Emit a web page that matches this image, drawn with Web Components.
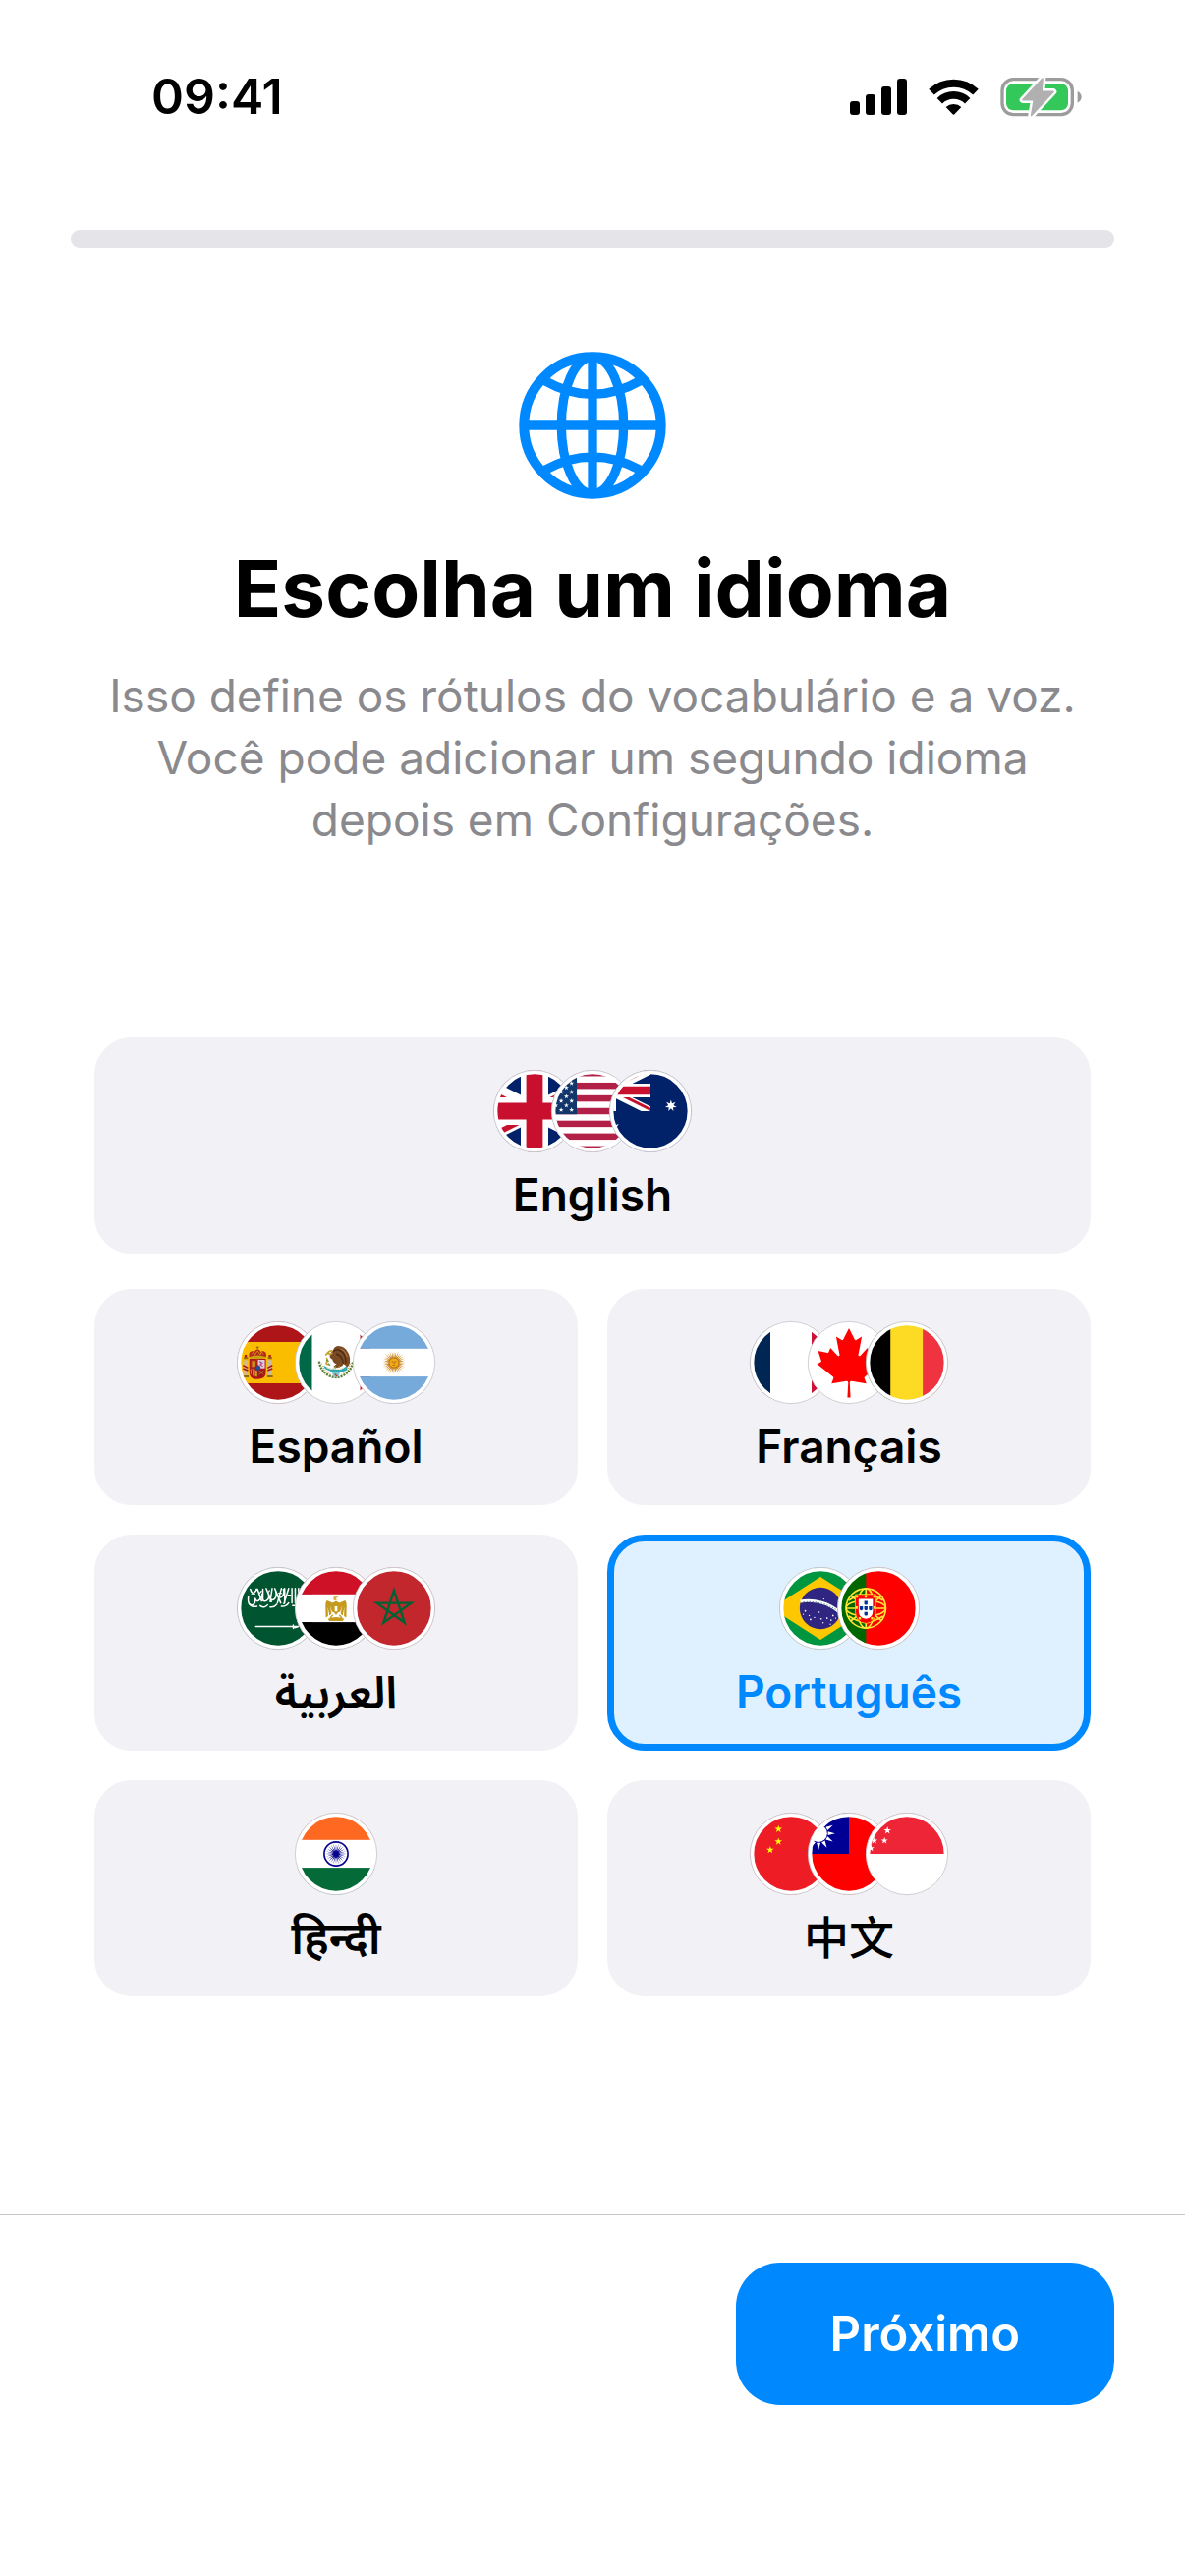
<!DOCTYPE html>
<html lang="pt">
<head>
<meta charset="utf-8">
<meta name="viewport" content="width=device-width, initial-scale=1">
<title>Escolha um idioma</title>
<style>
  :root {
    --blue: #0088ff;
    --fill: #f1f1f6;
    --gutter: 72px;
  }
  body {
    margin: 0;
    background: #fff;
    color: #000;
    font-family: Inter, "Noto Sans", "Noto Sans Arabic", "Noto Sans Devanagari", "Noto Sans CJK SC", sans-serif;
  }
</style>
</head>
<body>
<onboarding-screen>
  <status-bar slot="status">09:41</status-bar>
  <step-progress slot="progress" value="0" label="Progresso"></step-progress>
  <intro-header slot="intro">
    <span slot="title">Escolha um idioma</span>
    <span slot="text">Isso define os rótulos do vocabulário e a voz. Você pode adicionar um segundo idioma depois em Configurações.</span>
  </intro-header>
  <language-picker slot="content">
    <language-card slot="featured" flags="gb us au" lang="en">English</language-card>
    <language-card flags="es mx ar" lang="es">Español</language-card>
    <language-card flags="fr ca be" lang="fr">Français</language-card>
    <language-card flags="sa eg ma" lang="ar">العربية</language-card>
    <language-card flags="br pt" lang="pt" selected>Português</language-card>
    <language-card flags="in" lang="hi">हिन्दी</language-card>
    <language-card flags="cn tw sg" lang="zh">中文</language-card>
  </language-picker>
  <action-bar slot="footer">Próximo</action-bar>
</onboarding-screen>

<script>
/* ---------- drawing helpers ---------- */
const star = (cx, cy, R, n = 5, inner = 0.382) => {
  let d = '';
  for (let i = 0; i < n * 2; i++) {
    const r = i % 2 ? R * inner : R, a = Math.PI * i / n;
    d += (i ? 'L' : 'M') + (cx + r * Math.sin(a)).toFixed(1) + ' ' + (cy - r * Math.cos(a)).toFixed(1);
  }
  return d + 'Z';
};
const rays = (n, r1, r2, half, turn = 0) => {
  let d = '';
  for (let i = 0; i < n; i++) {
    const a = 2 * Math.PI * i / n + turn;
    const p = (r, t) => (r * Math.sin(t)).toFixed(1) + ' ' + (-r * Math.cos(t)).toFixed(1);
    d += 'M' + p(r1, a - half) + 'L' + p(r2, a) + 'L' + p(r1, a + half) + 'Z';
  }
  return d;
};
const rect = (x, y, w, h, f) => `<rect x="${x}" y="${y}" width="${w}" height="${h}" fill="${f}"/>`;
const rows = (a, b, c) => rect(-125, -125, 250, 83, a) + rect(-125, -42, 250, 84, b) + rect(-125, 42, 250, 83, c);
const union = (t) => `<g transform="${t}">
  <clipPath id="uj"><path d="M30 15h30v15zv15H0zH0V0zV0h30z"/></clipPath>
  <clipPath id="ub"><path d="M0 0h60v30H0z"/></clipPath>
  <g clip-path="url(#ub)"><path d="M0 0h60v30H0z" fill="#012169"/>
  <path d="M0 0l60 30M60 0L0 30" stroke="#fff" stroke-width="6"/>
  <path d="M0 0l60 30M60 0L0 30" clip-path="url(#uj)" stroke="#c8102e" stroke-width="4"/>
  <path d="M30 0v30M0 15h60" stroke="#fff" stroke-width="10"/>
  <path d="M30 0v30M0 15h60" stroke="#c8102e" stroke-width="6"/></g></g>`;
const usStars = () => {
  let d = '';
  for (let k = 8; k < 12; k++) for (let j = 1; j < 10; j++)
    if ((k + j) % 2 === 0) d += star(-237.5 + 15.83 * k, -125 + 13.46 * j, 7.7);
  return `<path fill="#fff" d="${d}"/>`;
};
const usStripes = () => {
  let s = '';
  for (let i = 0; i < 13; i += 2) s += rect(-125, (-125 + 19.23 * i).toFixed(1), 250, 19.23, '#b22048');
  return s;
};

/* Every flag is drawn around the origin in a 250 x 250 square. */
const FLAGS = {
  gb: () => union('translate(-250 -125) scale(8.333)'),
  us: () => rect(-125, -125, 250, 250, '#fff') + usStripes() + rect(-125, -125, 77.5, 134.6, '#12356a') + usStars(),
  au: () => rect(-125, -125, 250, 250, '#012169') + union('translate(-250 -125) scale(4.1667)') +
    `<path fill="#fff" d="${star(62, -16, 18, 7, 0.444)}${star(-125, 62, 37, 7, 0.444)}${star(125, 83, 18, 7, 0.444)}"/>`,
  es: () => rect(-125, -125, 250, 250, '#ad1519') + rect(-125, -62.5, 250, 125, '#fabd00') + `
    <g fill="none" stroke="#ad1519" stroke-width="3">
      <path d="M-98-8v46M-25-8v46" stroke="#c9b9a9" stroke-width="9"/>
      <path d="M-104-14h13M-31-14h13M-106 42h17M-33 42h17" stroke="#8f6a1a" stroke-width="6"/>
      <path d="M-106 8l15 8M-106 18l15 6M-17 8l-15 8M-17 18l-15 6" stroke-width="5"/>
      <path d="M-98-24v8M-25-24v8" stroke-width="7"/>
    </g>
    <path d="M-87-12h50v42q0 20-25 20t-25-20z" fill="#ad1519"/>
    <path d="M-84-9h21v26h-21z" fill="#b3261c"/><path d="M-79-5h10v18h-10z" fill="#c79a10"/>
    <path d="M-61-9h21v26h-21z" fill="#e0cbd6"/><path d="M-56-4l8 5-6 5 8 5" stroke="#b0549a" stroke-width="4" fill="none"/>
    <path d="M-84 19h21v24q-21-3-21-13z" fill="#c8a012"/><path d="M-79 20v18M-72 20v21" stroke="#ad1519" stroke-width="4"/>
    <path d="M-61 19h21v11q0 10-21 13z" fill="#a01825"/><path d="M-58 24l14 12M-44 24l-14 12" stroke="#c8a012" stroke-width="2"/>
    <circle cx="-62" cy="16" r="8" fill="#1c4f9c" stroke="#ad1519" stroke-width="2"/>
    <path d="M-87-16q-4-14 5-18 7-3 10 2 3-8 10-8t10 8q3-5 10-2 9 4 5 18z" fill="#b3261c"/>
    <path d="M-86-18q24-8 48 0v4q-24 5-48 0z" fill="#c8a012"/>
    <path d="M-62-50v12M-66-46h8" stroke="#8f6a1a" stroke-width="3"/>
    <path d="M-80-25l6-8 4 9 8-12 8 12 4-9 6 8" stroke="#d9a010" stroke-width="2.5" fill="none"/>`,
  mx: () => rect(-125, -125, 250, 250, '#fff') + rect(-125, -125, 52, 250, '#006847') + rect(73, -125, 52, 250, '#ce1126') + `
    <path d="M-51-4q4 30 31 44q20 9 40 0q27-14 31-44" fill="none" stroke="#5d7f35" stroke-width="7" stroke-dasharray="6 3"/>
    <path d="M-44 2q8 24 28 34M44 2q-8 24-28 34" fill="none" stroke="#c9a845" stroke-width="3" stroke-dasharray="3 4"/>
    <path d="M-38 8q10 6 18 8t20 4 22-4 14-8l-3 14q-14 9-32 8T-34 18z" fill="#30a8b0"/>
    <path d="M-28 14l12 5 12-3 14 4 14-6" fill="none" stroke="#f2e6c0" stroke-width="3"/>
    <path d="M-12 30h24l-5 14H-8z" fill="#7cc5d2"/><path d="M-4 34l8 8" stroke="#c43b2c" stroke-width="4"/>
    <path d="M-9-38q6-14 20-12 16 2 23 16 9 12 8 30-1 14-10 17-4-7-10-9-2 9-10 8-10 6-20 0 4-5 10-8-12-4-13-14-10-4-8-12 2-8 10-16z" fill="#7c4a22"/>
    <path d="M8-38q14 4 19 18 3 10 2 22M0-26q12 2 18 14 4 8 4 14M-8-34q6-6 16-6" fill="none" stroke="#4a2b14" stroke-width="4"/>
    <path d="M14-42q14 6 20 24" fill="none" stroke="#b07a45" stroke-width="3"/>
    <path d="M-11-36q-11-1-14 8l8 2 6-4M-30-14q8 6 2 12t6 8M-24-32l-8 10" fill="none" stroke="#c7a23a" stroke-width="5"/>
    <path d="M-22-4l-8-4M-18 8l-6-6M-2 8v8M10 8v6" stroke="#7a8f35" stroke-width="4"/>`,
  ar: () => rows('#75aadb', '#fff', '#75aadb') + `
    <path d="${rays(16, 12, 36, 0.22)}" fill="#e0a020"/>
    <path d="${rays(16, 12, 34, 0.16, 0.196)}" fill="#b5702a"/>
    <circle r="15" fill="#f1ab16" stroke="#a35c12" stroke-width="2"/>
    <path d="M-7-3h5M2-3h5M0-2v5M-4 7h8" stroke="#85340a" stroke-width="1.8"/>`,
  fr: () => rect(-125, -125, 250, 250, '#fff') + rect(-125, -125, 62.5, 250, '#002654') + rect(62.5, -125, 62.5, 250, '#ce1136'),
  ca: () => rect(-125, -125, 250, 250, '#fff') + `<path transform="scale(.052)" fill="#f00" d="m-90 2030 45-863a95 95 0 0 0-111-98l-859 151 116-320a65 65 0 0 0-20-73l-941-762 212-99a65 65 0 0 0 34-79l-186-572 542 115a65 65 0 0 0 73-38l105-247 423 454a65 65 0 0 0 111-57l-204-1052 327 189a65 65 0 0 0 91-27l332-652 332 652a65 65 0 0 0 91 27l327-189-204 1052a65 65 0 0 0 111 57l423-454 105 247a65 65 0 0 0 73 38l542-115-186 572a65 65 0 0 0 34 79l212 99-941 762a65 65 0 0 0-20 73l116 320-859-151a95 95 0 0 0-111 98l45 863z"/>`,
  be: () => rect(-125, -125, 250, 250, '#fdda24') + rect(-125, -125, 75, 250, '#000') + rect(48, -125, 77, 250, '#ef3340'),
  sa: () => rect(-125, -125, 250, 250, '#005430') + `
    <g fill="none" stroke="#fff" stroke-width="4.5" stroke-linecap="round" stroke-linejoin="round">
      <path d="M-90-36q-3 26 10 26t10-20q6 14 14 4t8-18q-2 26 10 22t10-20q4 20 14 16t8-24q6 22 16 16t6-24"/>
      <path d="M-84-58q4 18 14 8t4-8M-62-58l12 36M-46-58v34M-36-60l16 40M-18-60l-6 40M-10-60l18 44M10-60l-12 44M20-60v44M32-60L18-14M42-60v44M52-60v44M62-60v40"/>
      <path d="M-88-14q8 12 24 8M-54-8q12 10 22-2M-24-4q12 2 20-8M10-6q14 2 22-10M44-8h20"/>
      <path d="M-80-44h10M-56-46l6-6M-30-48l4-6M2-46h8M30-40h8" stroke-width="3.5"/>
      <path d="M-68 55H62M46 50v11M50 59l10-3" stroke-width="4"/>
    </g>`,
  eg: () => rows('#ce1126', '#fff', '#000') + `
    <path d="M-8-28q-1-9 7-10 7 0 7 5l-6 2 2 7h-8z" fill="#dcb44c"/>
    <g fill="#c69a1c">
    <path d="M-28-24q-4 4-4 16l1 36 7-4-1-28 5 26 6-5-4-26 6 22 5-6-3-20zM28-24q4 4 4 16l-1 36-7-4 1-28-5 26-6-5 4-26-6 22-5-6 3-20z"/>
    <path d="M-28-24l18 8 10-6 10 6 18-8-16 18H-12z"/>
    <path d="M-9-10H9v20L0 20-9 10z"/><path d="M-10 20L-18 30M10 20l8 10" stroke="#c69a1c" stroke-width="4"/>
    <path d="M-25 32q25-10 50 0l-5 7h-40z"/></g><path d="M-4-6h8v16h-8z" fill="#fff"/>`,
  ma: () => rect(-125, -125, 250, 250, '#c1272d') + `
    <path d="M0-54L32 44-52-16H52L-32 44Z" fill="none" stroke="#006233" stroke-width="7"/>`,
  br: () => rect(-125, -125, 250, 250, '#009640') + `
    <path d="M0-95L148 0 0 95-148 0z" fill="#fec800"/><circle r="63" fill="#302681"/>
    <path d="M-61-21A147 147 0 0 1 60 14" fill="none" stroke="#fff" stroke-width="9"/>
    <path d="M-52-19q60-6 108 30" fill="none" stroke="#5c8f8c" stroke-width="3" stroke-dasharray="4 5"/>
    <g fill="#fff"><circle cx="-46" cy="8" r="2.5"/><circle cx="-52" cy="18" r="2"/><circle cx="-34" cy="22" r="2"/><circle cx="-30" cy="34" r="2.5"/><circle cx="-18" cy="28" r="2"/><circle cx="-4" cy="12" r="2"/><circle cx="2" cy="32" r="2.5"/><circle cx="8" cy="44" r="2"/><circle cx="20" cy="30" r="2.5"/><circle cx="32" cy="36" r="2.5"/><circle cx="38" cy="22" r="2.5"/><circle cx="30" cy="48" r="2"/><circle cx="46" cy="30" r="2"/><circle cx="10" cy="-28" r="2"/></g>`,
  pt: () => rect(-125, -125, 250, 250, '#f00') + rect(-125, -125, 87.5, 250, '#060') + `
    <g transform="translate(-38 0)" fill="none" stroke="#ffe534" stroke-width="5">
      <circle r="60"/><ellipse rx="60" ry="24"/><ellipse rx="26" ry="60"/><path d="M0-60V60M-60 0H60M-45-38Q0-4 48 38M-45 38Q0 4 48-38M-52-24Q0-58 52-24M-52 24Q0 58 52 24"/>
    </g>
    <path d="M-70-42H-8V10q0 33-30 36-31-3-32-36z" fill="#f00" stroke="#ffe534" stroke-width="2"/>
    <path d="M-60-28h43v36q0 22-21 24-22-2-22-24z" fill="#fff"/>
    <g fill="#039"><path d="M-43-22h10v9q-5 5-10 0zM-43-6h10v10q-5 5-10 0zM-57-6h10v10q-5 5-10 0zM-29-6h10v10q-5 5-10 0zM-43 11h10v9q-5 5-10 0z"/></g>
    <g fill="#ffe534"><path d="M-69-40h7v8h-7zM-42-40h7v8h-7zM-16-40h7v8h-7zM-69-6h6v8h-6zM-15-6h6v8h-6zM-60 27h7v7h-7zM-23 27h7v7h-7z"/></g>`,
  in: () => rows('#ff6820', '#fff', '#046a38') + `
    <path d="${rays(24, 8, 33, 0.16)}" fill="#07038d"/><circle r="9" fill="#07038d"/>
    <circle r="36" fill="none" stroke="#07038d" stroke-width="5"/>`,
  cn: () => rect(-125, -125, 250, 250, '#ee1c25') +
    `<path fill="#ff0" d="${star(-38, -75, 12)}${star(-38, -37, 12)}${star(-63, -12, 12)}"/>`,
  tw: () => rect(-125, -125, 250, 250, '#fe0000') + rect(-125, -125, 125, 125, '#000095') +
    `<g transform="translate(-92 -62)" fill="#fff"><circle r="26"/><path d="${rays(12, 29, 50, 0.2)}"/></g>`,
  sg: () => rect(-125, -125, 250, 250, '#fff') + rect(-125, -125, 250, 125, '#ee2536') +
    `<path fill="#fff" d="${star(-59, -71, 12)}${star(-68, -40, 11)}${star(-99, -40, 11)}${star(-109, -17, 11)}"/>`
};

const define = (name, html, setup) => {
  const template = document.createElement('template');
  template.innerHTML = html;
  customElements.define(name, class extends HTMLElement {
    connectedCallback() {
      if (this.shadowRoot) return;
      this.attachShadow({ mode: 'open' }).append(template.content.cloneNode(true));
      if (setup) setup(this, this.shadowRoot);
    }
  });
};

define('onboarding-screen', `
<style>
  :host { display: flex; flex-direction: column; min-height: 100vh; }
  main { flex: 1; }
</style>
<slot name="status"></slot>
<slot name="progress"></slot>
<main><slot name="intro"></slot><slot name="content"></slot></main>
<slot name="footer"></slot>`);

define('status-bar', `
<style>
  :host { display: flex; align-items: center; justify-content: space-between; height: 196px; padding: 0 105px 0 154px; font-size: 50px; font-weight: 600; line-height: 60px; }
  .icons { display: flex; align-items: center; gap: 22px; }
  svg { display: block; }
</style>
<time><slot></slot></time>
<div class="icons">
  <svg width="58" height="37" viewBox="0 0 174 111" aria-hidden="true"><rect y="69" width="30" height="42" rx="9"/><rect x="48" y="48" width="30" height="63" rx="9"/><rect x="96" y="24" width="30" height="87" rx="9"/><rect x="144" width="30" height="111" rx="9"/></svg>
  <svg width="51" height="37" viewBox="0 0 153 111" aria-hidden="true"><g fill="none" stroke="#000"><path d="M9 41A98 98 0 0 1 144 41" stroke-width="24"/><path d="M34 68A61 61 0 0 1 119 68" stroke-width="23"/></g><path d="M53 87A35 35 0 0 1 100 87L80 108q-4 4-7 0z"/></svg>
  <svg width="83" height="41" viewBox="0 0 249 123" aria-hidden="true">
    <rect x="6" y="8" width="214" height="108" rx="34" fill="none" stroke="#9c9c9c" stroke-width="10"/>
    <rect x="18" y="21" width="189" height="82" rx="22" fill="#34c759"/>
    <path d="M236 44q12 7 12 18t-12 18z" fill="#9c9c9c"/>
    <path d="M129 6L69 71h34L95 118 162 46h-36z" fill="#fff" stroke="#fff" stroke-width="20" stroke-linejoin="round"/>
    <path d="M129 6L69 71h34L95 118 162 46h-36z" fill="#b0b0b0" stroke="#b0b0b0" stroke-width="5" stroke-linejoin="round"/>
  </svg>
</div>`);

define('step-progress', `
<style>
  :host { display: block; margin: 38px var(--gutter) 0; }
  progress { display: block; width: 100%; height: 18px; border: 0; border-radius: 9px; overflow: hidden; appearance: none; background: #e4e4e9; }
  progress::-webkit-progress-bar { background: #e4e4e9; }
  progress::-webkit-progress-value { background: var(--blue); }
</style>
<progress max="1"></progress>`, (host, root) => {
  const bar = root.querySelector('progress');
  bar.value = Number(host.getAttribute('value'));
  bar.setAttribute('aria-label', host.getAttribute('label'));
});

define('intro-header', `
<style>
  :host { display: flex; flex-direction: column; align-items: center; margin: 106px 96px 0; text-align: center; }
  svg { display: block; }
  h1 { margin: 42px 0 0; font-size: 80px; line-height: 98px; font-weight: 700; }
  p { margin: 29px 0 0; font-size: 46px; line-height: 63px; color: #8a8a8e; }
</style>
<svg width="150" height="150" viewBox="-225 -225 450 450" fill="none" stroke="#0088ff" stroke-width="28" stroke-linecap="round" aria-hidden="true">
  <circle r="209" stroke-width="30"/><ellipse rx="95" ry="209"/>
  <path d="M-200 0H200M0-200V200M-147-137Q0-53 147-137M-147 137Q0 55 147 137"/>
</svg>
<h1><slot name="title"></slot></h1>
<p><slot name="text"></slot></p>`);

define('language-picker', `
<style>
  :host { display: flex; flex-direction: column; gap: 36px; margin: 190px 96px 60px; }
  .grid { display: grid; grid-template-columns: 1fr 1fr; gap: 30px; }
</style>
<slot name="featured"></slot>
<div class="grid"><slot></slot></div>`, (host) => {
  host.addEventListener('click', (event) => {
    const card = event.target.closest('language-card');
    if (!card) return;
    for (const item of host.querySelectorAll('language-card')) item.toggleAttribute('selected', item === card);
  });
});

customElements.define('language-card', class extends HTMLElement {
  static observedAttributes = ['selected'];
  connectedCallback() {
    if (this.shadowRoot) return;
    const flags = this.getAttribute('flags').split(' ').map((c) => `<flag-badge code="${c}"></flag-badge>`).join('');
    this.attachShadow({ mode: 'open' }).innerHTML = `
<style>
  :host { display: block; }
  button { box-sizing: border-box; display: flex; flex-direction: column; align-items: center; gap: 15px; width: 100%; margin: 0; padding: 26px 23px 24px; border: 7px solid var(--fill); border-radius: 38px; background: var(--fill); color: #000; font: inherit; font-size: 46px; font-weight: 600; line-height: 57px; cursor: pointer; }
  :host([selected]) button { border-color: var(--blue); background: #dff0ff; color: var(--blue); }
  :host(:lang(zh)) button { font-weight: 500; }
  .flags { display: flex; }
  flag-badge + flag-badge { margin-left: -25px; }
</style>
<button type="button"><span class="flags">${flags}</span><span><slot></slot></span></button>`;
    this.sync();
  }
  attributeChangedCallback() { this.sync(); }
  sync() {
    this.shadowRoot?.querySelector('button').setAttribute('aria-pressed', this.hasAttribute('selected'));
  }
});

customElements.define('flag-badge', class extends HTMLElement {
  connectedCallback() {
    if (this.shadowRoot) return;
    this.attachShadow({ mode: 'open' }).innerHTML = `
<style>
  :host { display: block; width: 84px; height: 84px; }
  svg { display: block; width: 100%; height: 100%; overflow: visible; }
</style>
<svg viewBox="-125 -125 250 250" aria-hidden="true">
  <clipPath id="disc"><circle r="124"/></clipPath>
  <g clip-path="url(#disc)">${FLAGS[this.getAttribute('code')]()}</g>
  <circle r="118" fill="none" stroke="#fff" stroke-width="12"/>
  <circle r="124" fill="none" stroke="#c6c6cc" stroke-width="2.5"/>
</svg>`;
  }
});

define('action-bar', `
<style>
  :host { display: flex; justify-content: flex-end; padding: 48px var(--gutter) 174px; border-top: 1px solid #c6c6c8; }
  button { margin: 0; padding: 43px 96px 42px; border: 0; border-radius: 45px; background: var(--blue); color: #fff; font: inherit; font-size: 49px; font-weight: 600; line-height: 60px; cursor: pointer; }
</style>
<button type="button"><slot></slot></button>`);
</script>
</body>
</html>
